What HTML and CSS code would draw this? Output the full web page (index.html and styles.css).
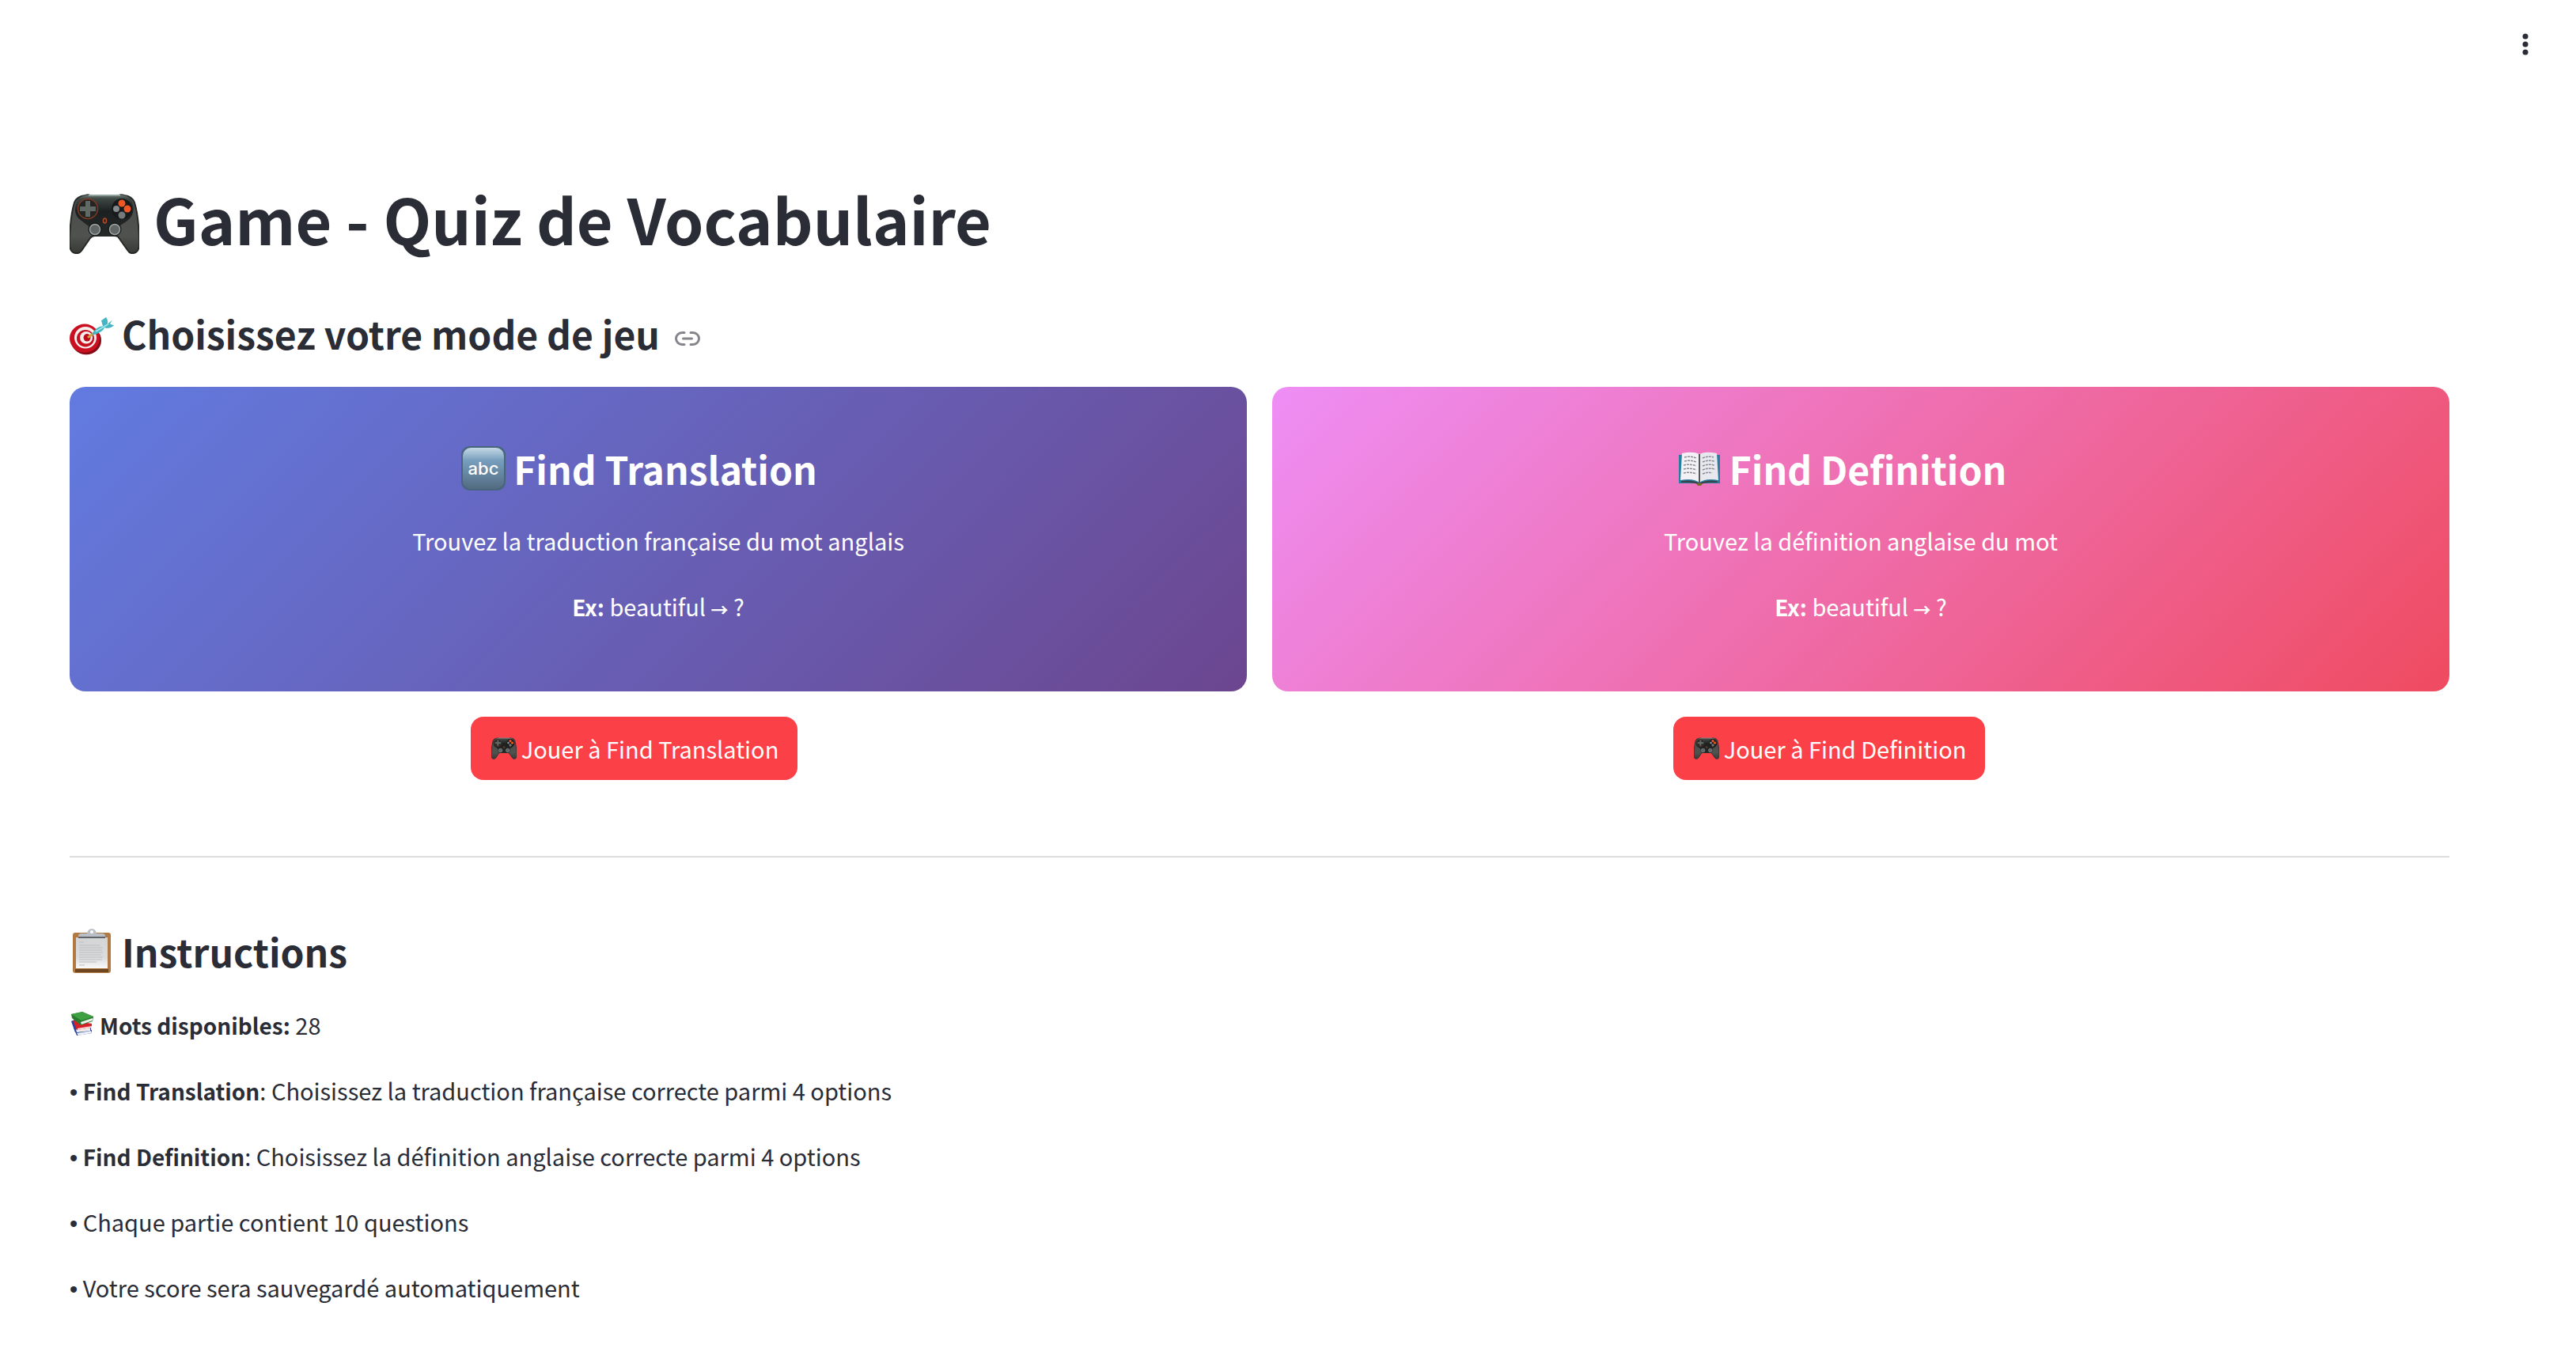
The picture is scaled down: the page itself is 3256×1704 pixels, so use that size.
FILE: index.html
```html
<!DOCTYPE html>
<html lang="fr">
<head>
<meta charset="utf-8">
<meta name="viewport" content="width=device-width, initial-scale=1">
<title>Game - Quiz de Vocabulaire</title>
<link rel="stylesheet" href="styles.css">
</head>
<body>
<svg class="defs" aria-hidden="true">
  <defs>
    <linearGradient id="padGrip" x1="0" y1="0" x2="0" y2="1"><stop offset="0" stop-color="#4a4c4a"/><stop offset=".7" stop-color="#50524e"/><stop offset="1" stop-color="#373936"/></linearGradient>
    <linearGradient id="padTop" x1="0" y1="0" x2="0" y2="1"><stop offset="0" stop-color="#6d7a75"/><stop offset=".1" stop-color="#3d4744"/><stop offset=".4" stop-color="#1c2020"/><stop offset="1" stop-color="#262a29"/></linearGradient>
    <symbol id="gamepad" viewBox="0 0 88 76">
      <path d="M20 2Q24 0 27 3H61Q64 0 69 2Q79 3 82 11Q87 27 88 58Q89 74 81 75Q76 76 73 71L61 54Q59 53 56 53H32Q28 53 26 56L15 72Q12 76 7 75Q-1 74 0 58Q1 27 6 11Q9 3 20 2Z" fill="url(#padGrip)" stroke="#272927" stroke-width="2"/>
      <path d="M20 2Q24 0 27 3H61Q64 0 69 2Q77 3 80 13Q83 26 73 34L64 40Q63 54 53 54Q48 54 45 53H43Q40 54 35 54Q25 53 24 41L15 34Q4 27 8 13Q11 3 20 2Z" fill="url(#padTop)"/>
      <path d="M24 2H64" stroke="#90a09a" stroke-width="2"/>
      <circle cx="23" cy="19" r="12.500" fill="#222524" stroke="#813923" stroke-width="1.500"/>
      <path d="M20 9h6v7h7v6h-7v7h-6v-7h-7v-6h7z" fill="#606963"/>
      <circle cx="66" cy="19" r="13" fill="#171a1a"/>
      <circle cx="66" cy="12" r="4.500" fill="#ef5727"/><circle cx="73" cy="19" r="4.500" fill="#ef5727"/>
      <circle cx="59" cy="19" r="4" fill="#858b8c"/><circle cx="66" cy="27" r="4.500" fill="#74797a"/>
      <circle cx="32" cy="45" r="8.500" fill="#151817"/><circle cx="32" cy="45" r="6.500" fill="#606665" stroke="#9ba19f" stroke-width="1.500"/>
      <circle cx="57" cy="45" r="8.500" fill="#151817"/><circle cx="57" cy="45" r="6.500" fill="#606665" stroke="#9ba19f" stroke-width="1.500"/>
      <ellipse cx="44.500" cy="34" rx="2" ry="3" fill="#29201c" stroke="#b64d28" stroke-width="1.500"/>
    </symbol>
  </defs>
</svg>

<header class="toolbar">
  <button class="menu-button" type="button" aria-label="Menu">
    <svg viewBox="0 0 28 28" class="menu-icon" aria-hidden="true"><circle cx="14" cy="4" r="3.500"/><circle cx="14" cy="14" r="3.500"/><circle cx="14" cy="24" r="3.500"/></svg>
  </button>
</header>

<main class="page">
  <h1 class="title"><svg class="title-icon" viewBox="0 0 88 76" role="img" aria-label="Manette"><use href="#gamepad"/></svg>Game - Quiz de Vocabulaire</h1>

  <h2 class="heading">
    <svg class="heading-icon" viewBox="0 0 56 56" role="img" aria-label="Cible">
      <g transform="translate(0 8) scale(1 .86)">
      <ellipse cx="21" cy="34" rx="19" ry="21" fill="#850b17"/>
      <ellipse cx="19" cy="31" rx="19" ry="21" fill="#ca1020"/>
      <ellipse cx="20" cy="30" rx="14" ry="16" fill="#f7eeee"/>
      <ellipse cx="20" cy="31" rx="11" ry="12.500" fill="#c51020"/>
      <ellipse cx="21" cy="30" rx="8" ry="9" fill="#f7eeee"/>
      <ellipse cx="22" cy="30" rx="4.500" ry="5.500" fill="#b80f1d"/>
      <path d="M23 30L32 22" stroke="#d6a238" stroke-width="3"/>
      <path d="M28 25Q34 13 42 13L40 5L46 0Q49 5 48 10L54 4L51 10L56 12Q51 18 44 15Q42 22 30 26Z" fill="#45b5c3"/>
      <path d="M33 21L49 10" stroke="#a1e6ea" stroke-width="2"/>
      </g>
    </svg>Choisissez votre mode de jeu
    <a class="anchor" href="#" aria-label="Lien vers cette section"><svg viewBox="0 0 32 18" class="anchor-icon" aria-hidden="true"><path d="M12 1.500H9a7.500 7.500 0 0 0 0 15h3M20 1.500h3a7.500 7.500 0 0 1 0 15h-3M10.500 9h11"/></svg></a>
  </h2>

  <div class="modes">
    <section class="mode">
      <div class="card card-translation">
        <h3 class="card-title"><svg class="heading-icon" viewBox="0 0 56 56" role="img" aria-label="Lettres">
          <defs><linearGradient id="abcFill" x1="0" y1="0" x2="0" y2="1"><stop offset="0" stop-color="#c5d9e5"/><stop offset=".3" stop-color="#789fbe"/><stop offset="1" stop-color="#526b80"/></linearGradient></defs>
          <rect width="56" height="56" rx="11" fill="#48657d"/><rect x="2" y="2" width="52" height="52" rx="10" fill="url(#abcFill)"/>
          <text x="28" y="36" text-anchor="middle" class="abc">abc</text>
        </svg>Find Translation</h3>
        <p class="text">Trouvez la traduction française du mot anglais</p>
        <p class="text"><strong>Ex:</strong> beautiful <span class="arrow">→</span> ?</p>
      </div>
      <div class="action"><button class="play" type="button"><svg class="play-icon" viewBox="0 0 88 76" aria-hidden="true"><use href="#gamepad"/></svg>Jouer à Find Translation</button></div>
    </section>
    <section class="mode">
      <div class="card card-definition">
        <h3 class="card-title"><svg class="heading-icon" viewBox="0 0 56 56" role="img" aria-label="Livre">
          <path d="M2 11H54V47H32Q28 50 24 47H2Z" fill="#287c9e"/>
          <path d="M5 44Q20 42 28 47Q36 42 51 44L50 46Q36 45 28 49Q20 45 5 46Z" fill="#3c4145"/>
          <path d="M6 9Q20 6 28 10V46Q20 40 4 43Z" fill="#f1f1f6"/><path d="M50 9Q36 6 28 10V46Q36 40 52 43Z" fill="#e8e8ef"/>
          <path d="M28 10V46" stroke="#55585b" stroke-width="2"/>
          <path d="M9 14q8-2 15 1M9 19q8-2 15 1M8 24q8-2 16 1M8 29q8-2 16 1M8 34q8-2 16 1M32 15q7-3 14-1M32 20q7-3 15-1M32 25q7-3 15-1M32 30q7-3 16-1M32 35q7-3 12-1" fill="none" stroke="#8b8c92" stroke-width="1.500" stroke-dasharray="3 1"/>
          <path d="M24 47h8l-2 3h-4z" fill="#7c6a21"/>
        </svg>Find Definition</h3>
        <p class="text">Trouvez la définition anglaise du mot</p>
        <p class="text"><strong>Ex:</strong> beautiful <span class="arrow">→</span> ?</p>
      </div>
      <div class="action"><button class="play" type="button"><svg class="play-icon" viewBox="0 0 88 76" aria-hidden="true"><use href="#gamepad"/></svg>Jouer à Find Definition</button></div>
    </section>
  </div>

  <hr class="divider">

  <h2 class="heading"><svg class="heading-icon" viewBox="0 0 56 56" role="img" aria-label="Presse-papiers">
      <defs><linearGradient id="paper" x1="0" y1="0" x2="0" y2="1"><stop offset="0" stop-color="#d3d4d5"/><stop offset=".65" stop-color="#dcdcdd"/><stop offset="1" stop-color="#fafafa"/></linearGradient></defs>
      <rect x="4" y="5" width="48" height="51" rx="3" fill="#b17a43"/><path d="M7 51h42v4H7z" fill="#6d451f"/>
      <path d="M8 11h40v39H8z" fill="url(#paper)"/>
      <path d="M11 12V9Q11 6 15 6H22Q23 0 28 0Q33 0 34 6H41Q45 6 45 9V12Z" fill="#b9bfc5"/>
      <circle cx="28" cy="4" r="2" fill="#fff"/><path d="M11 11h34" stroke="#60636a" stroke-width="2"/>
      <path d="M12 17h6M12 21h27M12 24h30M12 27h29M12 30h30M12 33h28M12 36h30M12 39h29M12 42h22M12 46h7" stroke="#bcbec0" stroke-width="1"/>
    </svg>Instructions</h2>
  <div class="notes">
    <p class="text"><svg class="text-icon" viewBox="0 0 32 32" role="img" aria-label="Livres">
      <path d="M5 20L9 30L28 27V23L8 19Z" fill="#294795"/><path d="M9 27L27 24L28 27L11 30Z" fill="#e9edf5"/>
      <path d="M2 12L7 26L27 23V18L6 10Z" fill="#2444a4"/><path d="M8 22L26 20V24L9 26Z" fill="#f0ecea"/>
      <path d="M4 11L9 23L28 20V15Z" fill="#d82028"/><path d="M10 21L28 18V20L10 23Z" fill="#f3dedc"/>
      <path d="M2 3L16 0L30 6L29 12L14 17L3 8Z" fill="#287d2c"/><path d="M2 3L16 0L30 6L15 11Z" fill="#40a044"/><path d="M14 13L29 8V11L15 16Z" fill="#eef2ec"/>
    </svg><strong>Mots disponibles:</strong> 28</p>
    <p class="text"><span class="bullet">•</span> <strong>Find Translation</strong>: Choisissez la traduction française correcte parmi 4 options</p>
    <p class="text"><span class="bullet">•</span> <strong>Find Definition</strong>: Choisissez la définition anglaise correcte parmi 4 options</p>
    <p class="text"><span class="bullet">•</span> Chaque partie contient 10 questions</p>
    <p class="text"><span class="bullet">•</span> Votre score sera sauvegardé automatiquement</p>
  </div>
</main>
</body>
</html>
```
FILE: styles.css
```css
* { box-sizing: border-box; }

body {
  margin: 0;
  background: #fff;
  color: #2a2c36;
  font-family: "Noto Sans CJK SC", "Noto Sans", sans-serif;
  font-size: 29px;
  line-height: 51px;
}

.defs { position: absolute; width: 0; height: 0; }

.toolbar {
  display: flex;
  justify-content: flex-end;
  align-items: center;
  height: 112px;
  padding: 0 40px;
}

.menu-button {
  display: flex;
  align-items: center;
  justify-content: center;
  width: 48px;
  height: 48px;
  padding: 0;
  border: 0;
  border-radius: 16px;
  background: none;
  color: inherit;
}

.menu-icon { width: 28px; height: 28px; fill: currentColor; }

.page { padding: 96px 160px 32px 88px; }

h1, h2, h3, p { margin: 0; }

.title {
  padding: 16px 0 43px;
  font-size: 79px;
  font-weight: 700;
  line-height: 104px;
}

.title-icon {
  width: 88px;
  height: 76px;
  margin-right: 18px;
  vertical-align: -11px;
}

.heading {
  padding: 16px 0 34px;
  font-size: 48px;
  font-weight: 600;
  line-height: 68px;
}

.heading-icon {
  width: 56px;
  height: 56px;
  margin-right: 10px;
  vertical-align: -7px;
}

.anchor { margin-left: 8px; color: #85868c; }

.anchor-icon {
  width: 32px;
  height: 18px;
  fill: none;
  stroke: currentColor;
  stroke-width: 3px;
  stroke-linecap: round;
  vertical-align: 5px;
}

.modes {
  display: grid;
  grid-template-columns: 1fr 1fr;
  gap: 32px;
}

.card {
  display: flex;
  flex-direction: column;
  gap: 32px;
  padding: 69px 40px 82px;
  border-radius: 20px;
  color: #fff;
  text-align: center;
}

.card-translation { background: linear-gradient(135deg, #627be0, #6c468f); }
.card-definition { background: linear-gradient(135deg, #ee8ef5, #ef4b60); }

.card-title {
  padding-right: 48px;
  font-size: 48px;
  font-weight: 600;
  line-height: 68px;
}

.abc {
  fill: #fff;
  font-family: Inter, sans-serif;
  font-size: 22px;
  font-weight: 500;
}

.action {
  display: grid;
  grid-template-columns: repeat(3, 1fr);
  gap: 32px;
  margin-top: 32px;
}

.play {
  grid-column: 2;
  justify-self: start;
  display: flex;
  align-items: center;
  gap: 6px;
  height: 80px;
  padding: 0 24px 0 26px;
  border: 0;
  border-radius: 16px;
  background: #fc4047;
  color: #fff;
  font: inherit;
  white-space: nowrap;
}

.play-icon { width: 32px; height: 28px; }

.divider {
  height: 2px;
  margin: 96px 0 68px;
  border: 0;
  background: #dddde0;
}

.text strong { font-size: 28px; font-weight: 600; line-height: 1; }

.text-icon {
  width: 32px;
  height: 32px;
  margin-right: 6px;
  vertical-align: -3px;
}

.bullet { font-family: "Liberation Sans", sans-serif; line-height: 1; }

.arrow { font-size: 22px; font-weight: 700; line-height: 1; }

.notes { display: flex; flex-direction: column; gap: 32px; }
```
